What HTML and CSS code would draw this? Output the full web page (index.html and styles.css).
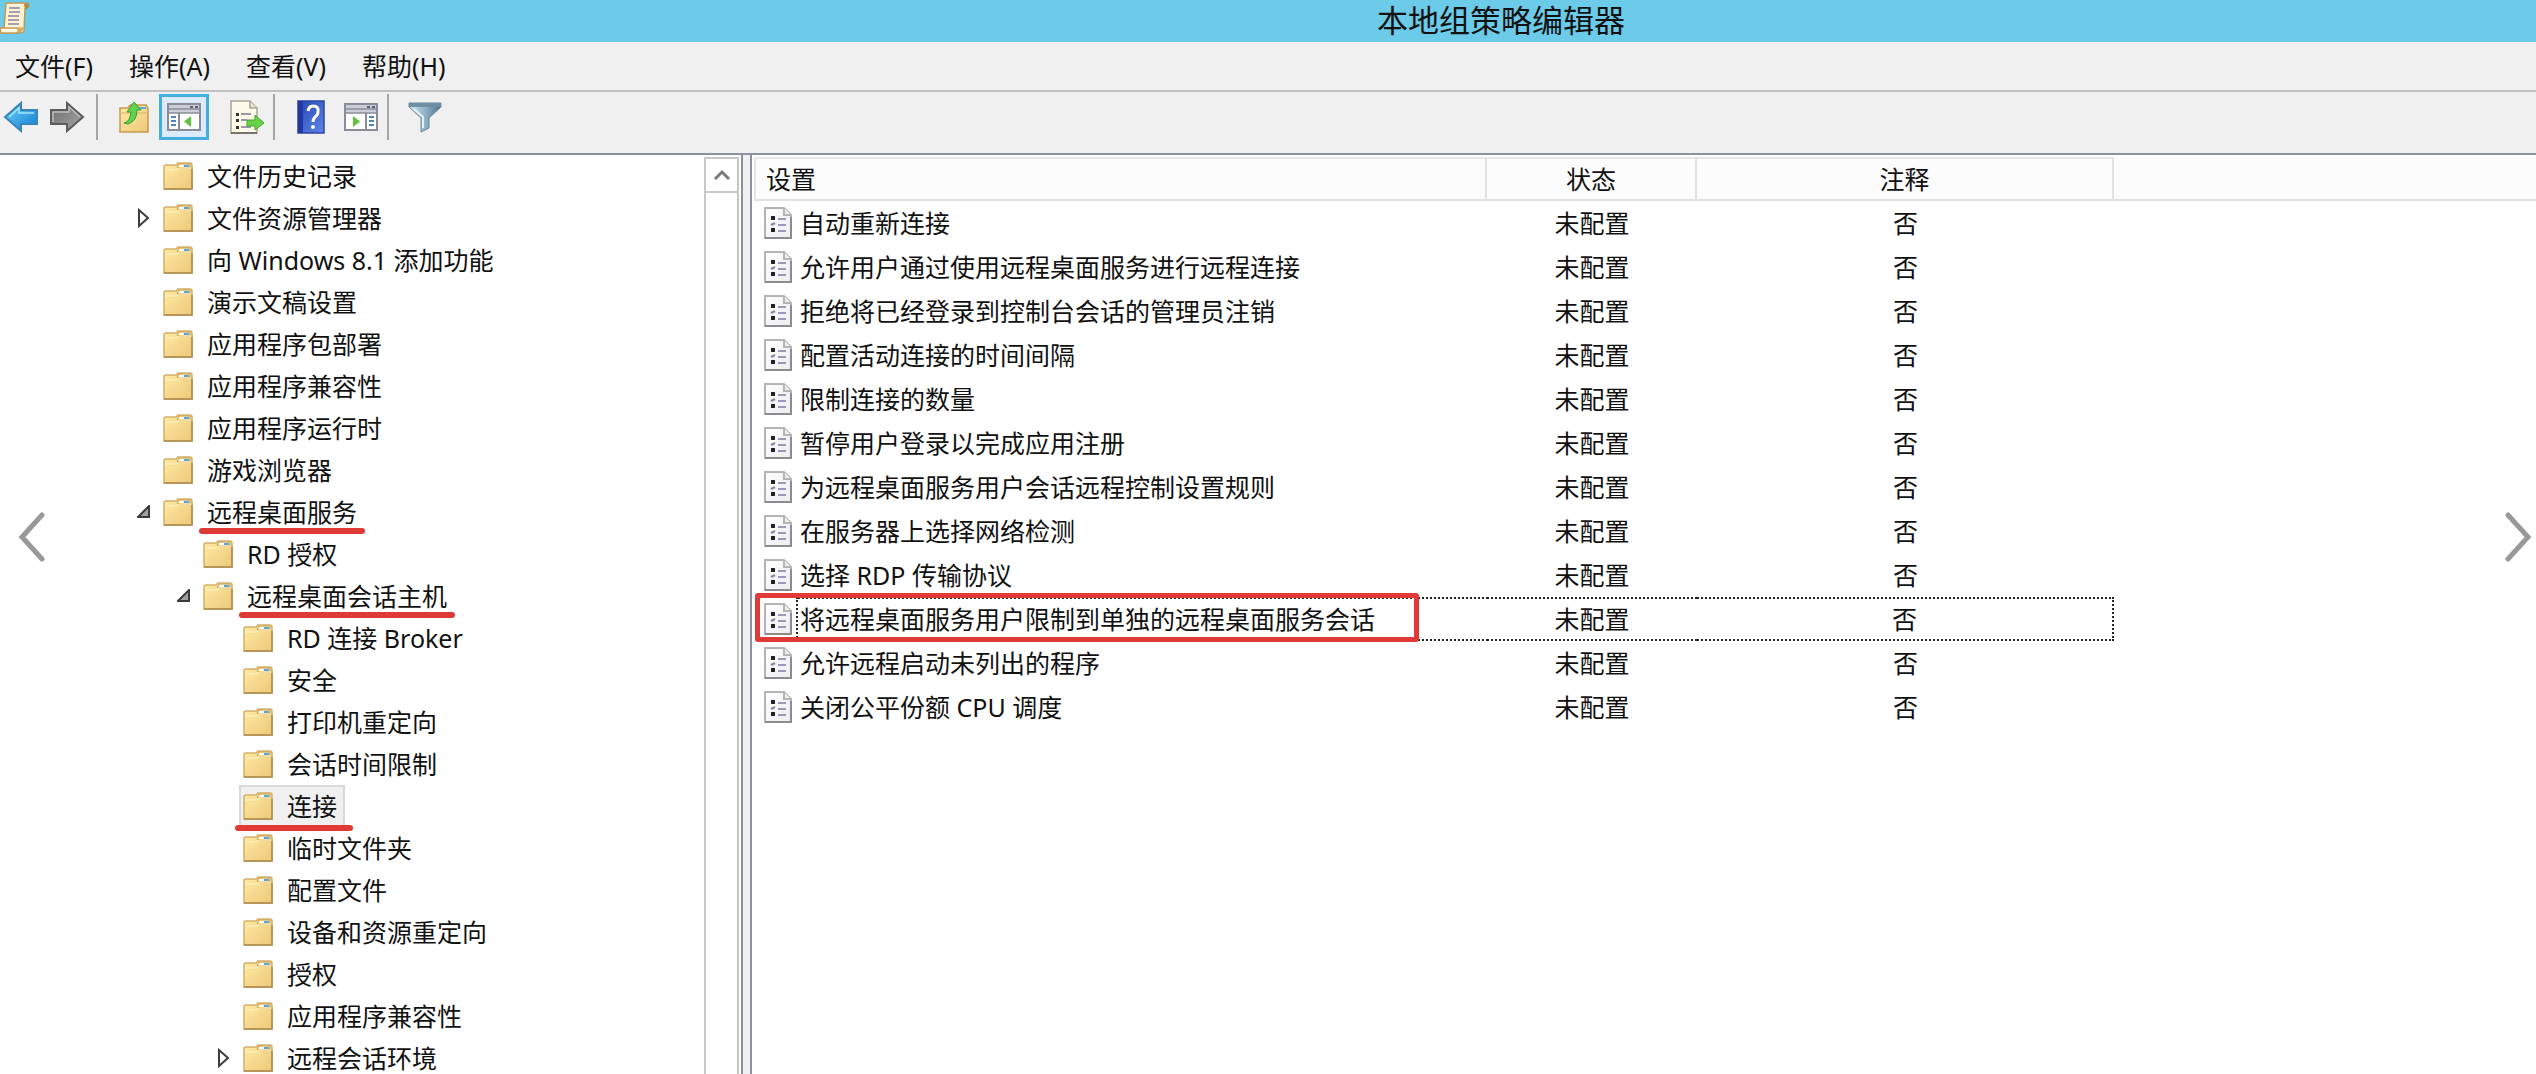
FILE: index.html
```
<!DOCTYPE html>
<html lang="zh-CN">

<head>
    <meta charset="UTF-8">
    <title>本地组策略编辑器</title>
    <link rel="stylesheet" href="styles.css">
</head>

<body>

    <!-- 共用图标 -->
    <svg class="defs" width="0" height="0" aria-hidden="true">
        <defs>
            <linearGradient id="g-folder" x1="0" y1="0" x2="1" y2="1">
                <stop offset="0" stop-color="#ffeaa6" />
                <stop offset="1" stop-color="#edc878" />
            </linearGradient>
            <linearGradient id="g-blue" x1="0" y1="0" x2="1" y2="1">
                <stop offset="0" stop-color="#6fd0fa" />
                <stop offset="1" stop-color="#0f7ed2" />
            </linearGradient>
            <linearGradient id="g-gray" x1="0" y1="0" x2="1" y2="1">
                <stop offset="0" stop-color="#6a6a6a" />
                <stop offset="1" stop-color="#a8a8a8" />
            </linearGradient>
            <linearGradient id="g-help" x1="0" y1="0" x2="1" y2="1">
                <stop offset="0" stop-color="#2746b0" />
                <stop offset="1" stop-color="#5d86ea" />
            </linearGradient>
            <linearGradient id="g-funnel" x1="0" y1="0" x2="1" y2="0">
                <stop offset="0" stop-color="#d4e8f3" />
                <stop offset="0.5" stop-color="#8fb3c8" />
                <stop offset="1" stop-color="#4f7288" />
            </linearGradient>
            <linearGradient id="g-paper" x1="0" y1="0" x2="1" y2="1">
                <stop offset="0" stop-color="#ffffff" />
                <stop offset="1" stop-color="#ececf0" />
            </linearGradient>
        </defs>
        <symbol id="folder" viewBox="0 0 30 28">
            <path d="M1 27V5q0-2 2-2h10l2-2h12q2 0 2 2v24z" fill="url(#g-folder)" stroke="#d3b068" stroke-width="1.5" />
            <path d="M14 5l2-3h11v4H15z" fill="#f8e6b4" stroke="#c9a45c" stroke-width="1" />
            <path d="M17 3h4v2h-4z" fill="#fff" />
            <path d="M21 3h5v2h-5z" fill="#5aa5dc" />
            <path d="M2 8h12l2-2h12" fill="none" stroke="#fff3c4" stroke-width="1" />
            <path d="M1 27h28V7" fill="none" stroke="#a98a4c" stroke-width="1.5" />
        </symbol>
        <symbol id="policy" viewBox="0 0 28 32">
            <path d="M1 1h19l7 7v23H1z" fill="url(#g-paper)" stroke="#b4b4b4" stroke-width="2" />
            <path d="M20 1v7h7" fill="#eee" stroke="#b4b4b4" stroke-width="2" />
            <path d="M1 31h26V10" fill="none" stroke="#8c8c8c" stroke-width="2" />
            <path d="M7 9h4v4H7zM7 21h4v4H7z" fill="#222" />
            <path d="M7 18l4-2" stroke="#8b87a8" stroke-width="2.5" />
            <path d="M14 12h8M14 18h8M14 24h8" stroke="#9b98bb" stroke-width="2" />
        </symbol>
        <symbol id="opened" viewBox="0 0 14 14">
            <path d="M12 1v11H1z" fill="#a0a0a0" stroke="#3c3c3c" stroke-width="2" />
        </symbol>
        <symbol id="closed" viewBox="0 0 14 20">
            <path d="M2 2l9 8-9 8z" fill="#fff" stroke="#3c3c3c" stroke-width="2" />
        </symbol>
    </svg>

    <div id="window">
        <header class="title-bar">
            <svg class="app-icon" width="30" height="32" viewBox="0 0 30 32" aria-hidden="true">
                <path d="M6 1h21q3 1 1 4l-3 2-1 22q-1 2-4 2H3q-3-1-3-5h4z" fill="#fdf3d4" stroke="#b99860" stroke-width="1.5" />
                <path d="M24 2q5-2 5 3l-4 3z" fill="#b38a47" />
                <path d="M0 26h18q1 5-2 5H1z" fill="#fff8df" stroke="#c49c5a" stroke-width="1.5" />
                <path d="M18 26l5-1q1 5-5 6z" fill="#d9a95e" />
                <path d="M9 6h11M9 10h11M8 14h11M8 18h11M8 22h11" stroke="#8d83a2" stroke-width="1.5" />
            </svg>
            <h1>本地组策略编辑器</h1>
        </header>

        <nav class="menu-bar">
            <button type="button">文件(F)</button>
            <button type="button">操作(A)</button>
            <button type="button">查看(V)</button>
            <button type="button">帮助(H)</button>
        </nav>

        <div class="tool-bar">
            <button type="button" aria-label="后退">
                <svg width="36" height="32" viewBox="0 0 36 32">
                    <path d="M2 16L18 2v7h16v14H18v7z" fill="url(#g-blue)" stroke="#3a85b8" stroke-width="2" />
                    <path d="M6 16L16 7v5h15" fill="none" stroke="#a5e4ff" stroke-width="1.5" />
                </svg>
            </button>
            <button type="button" aria-label="前进">
                <svg width="36" height="32" viewBox="0 0 36 32">
                    <path d="M34 16L18 2v7H2v14h16v7z" fill="url(#g-gray)" stroke="#5c5c5c" stroke-width="2" />
                    <path d="M4 21V11h16V6l11 10" fill="none" stroke="#bdbdbd" stroke-width="1.5" />
                </svg>
            </button>
            <span class="separator"></span>
            <button type="button" class="wide" aria-label="上一级">
                <svg width="32" height="32" viewBox="0 0 32 32">
                    <path d="M2 31V7h8l2-3h16l2 3v24z" fill="url(#g-folder)" stroke="#c39b51" stroke-width="1.5" />
                    <path d="M21 6h7v2h-7z" fill="#5aa5dc" />
                    <path d="M2 12h28" stroke="#d9b467" stroke-width="1" />
                    <path d="M6 22q6-1 7-11H9l7-10 7 8h-4q0 11-9 14z" fill="#62d150" stroke="#36a02c" stroke-width="1" />
                </svg>
            </button>
            <button type="button" class="wide active" aria-label="显示/隐藏控制台树">
                <svg width="34" height="28" viewBox="0 0 34 28">
                    <path d="M1 1h32v26H1z" fill="#fff" stroke="#8a8c98" stroke-width="2" />
                    <path d="M2 2h30v8H2z" fill="#c9ced9" />
                    <path d="M2 6h30M2 10h30" stroke="#8a8c98" stroke-width="1.5" />
                    <path d="M23 3h3v2h-3zM28 3h3v2h-3z" fill="#53617e" />
                    <path d="M12 10v17" stroke="#8a8c98" stroke-width="2" />
                    <path d="M4 14h5M4 18h5M4 22h5" stroke="#4f83b8" stroke-width="2" />
                    <path d="M24 13v11l-7-5.500z" fill="#5cc23a" />
                </svg>
            </button>
            <button type="button" class="wide" aria-label="导出列表">
                <svg width="34" height="34" viewBox="0 0 34 34">
                    <path d="M1 1h19l7 7v25H1z" fill="#fdfaea" stroke="#a9a493" stroke-width="1.5" />
                    <path d="M20 1v7h7" fill="#e8e4d4" stroke="#a9a493" stroke-width="1.5" />
                    <path d="M1 33h26" stroke="#77736a" stroke-width="2" />
                    <path d="M6 13h3v3H6zM6 19h3v3H6zM6 26h3v3H6z" fill="#333" />
                    <path d="M11 14h10M11 20h6M11 27h10" stroke="#7a7892" stroke-width="1.5" />
                    <path d="M17 20h8v-5l9 8-9 7v-4h-8z" fill="#67d348" stroke="#43a82e" stroke-width="1" />
                </svg>
            </button>
            <span class="separator"></span>
            <button type="button" class="wide" aria-label="帮助">
                <svg width="28" height="34" viewBox="0 0 28 34">
                    <path d="M1 1h26v32H1z" fill="url(#g-help)" stroke="#2b46a0" stroke-width="1.5" />
                    <path d="M1 1h5v32H1z" fill="#2038a0" />
                    <path d="M11 11q1-5 5-5 6 0 5 6 0 3-3 5-2 2-2 5" fill="none" stroke="#fff" stroke-width="3" />
                    <circle cx="16" cy="27" r="2" fill="#fff" />
                </svg>
            </button>
            <button type="button" class="wide" aria-label="显示/隐藏操作窗格">
                <svg width="34" height="28" viewBox="0 0 34 28">
                    <path d="M1 1h32v26H1z" fill="#fff" stroke="#8a8c98" stroke-width="2" />
                    <path d="M2 2h30v8H2z" fill="#c9ced9" />
                    <path d="M2 6h30M2 10h30" stroke="#8a8c98" stroke-width="1.5" />
                    <path d="M23 3h3v2h-3zM28 3h3v2h-3z" fill="#53617e" />
                    <path d="M22 10v17" stroke="#8a8c98" stroke-width="2" />
                    <path d="M25 14h5M25 18h5M25 22h5" stroke="#4f83b8" stroke-width="2" />
                    <path d="M9 13v11l7-5.500z" fill="#5cc23a" />
                </svg>
            </button>
            <span class="separator"></span>
            <button type="button" class="wide" aria-label="筛选器">
                <svg width="34" height="32" viewBox="0 0 34 32">
                    <path d="M1 2h32v4L21 17v10l-8 4V17L1 6z" fill="url(#g-funnel)" stroke="#6f8795" stroke-width="1" />
                    <path d="M1 2h32v4H1z" fill="#6d8ea3" />
                    <path d="M6 8l9 8v11" fill="none" stroke="#e4f3fa" stroke-width="2" />
                </svg>
            </button>
        </div>

        <main class="panes">
            <section class="tree-pane">
                <ul class="tree">
                    <li><div class="node"><svg class="folder"><use href="#folder" /></svg><span>文件历史记录</span></div></li>
                    <li><div class="node"><button type="button" class="toggle" aria-label="展开"><svg width="14" height="20"><use href="#closed" /></svg></button><svg class="folder"><use href="#folder" /></svg><span>文件资源管理器</span></div></li>
                    <li><div class="node"><svg class="folder"><use href="#folder" /></svg><span>向 Windows 8.1 添加功能</span></div></li>
                    <li><div class="node"><svg class="folder"><use href="#folder" /></svg><span>演示文稿设置</span></div></li>
                    <li><div class="node"><svg class="folder"><use href="#folder" /></svg><span>应用程序包部署</span></div></li>
                    <li><div class="node"><svg class="folder"><use href="#folder" /></svg><span>应用程序兼容性</span></div></li>
                    <li><div class="node"><svg class="folder"><use href="#folder" /></svg><span>应用程序运行时</span></div></li>
                    <li><div class="node"><svg class="folder"><use href="#folder" /></svg><span>游戏浏览器</span></div></li>
                    <li>
                        <div class="node"><button type="button" class="toggle" aria-label="折叠"><svg width="14" height="14"><use href="#opened" /></svg></button><svg class="folder"><use href="#folder" /></svg><span class="underlined">远程桌面服务</span></div>
                        <ul>
                            <li><div class="node"><svg class="folder"><use href="#folder" /></svg><span>RD 授权</span></div></li>
                            <li>
                                <div class="node"><button type="button" class="toggle" aria-label="折叠"><svg width="14" height="14"><use href="#opened" /></svg></button><svg class="folder"><use href="#folder" /></svg><span class="underlined">远程桌面会话主机</span></div>
                                <ul>
                                    <li><div class="node"><svg class="folder"><use href="#folder" /></svg><span>RD 连接 Broker</span></div></li>
                                    <li><div class="node"><svg class="folder"><use href="#folder" /></svg><span>安全</span></div></li>
                                    <li><div class="node"><svg class="folder"><use href="#folder" /></svg><span>打印机重定向</span></div></li>
                                    <li><div class="node"><svg class="folder"><use href="#folder" /></svg><span>会话时间限制</span></div></li>
                                    <li><div class="node selected underlined"><svg class="folder"><use href="#folder" /></svg><span>连接</span></div></li>
                                    <li><div class="node"><svg class="folder"><use href="#folder" /></svg><span>临时文件夹</span></div></li>
                                    <li><div class="node"><svg class="folder"><use href="#folder" /></svg><span>配置文件</span></div></li>
                                    <li><div class="node"><svg class="folder"><use href="#folder" /></svg><span>设备和资源重定向</span></div></li>
                                    <li><div class="node"><svg class="folder"><use href="#folder" /></svg><span>授权</span></div></li>
                                    <li><div class="node"><svg class="folder"><use href="#folder" /></svg><span>应用程序兼容性</span></div></li>
                                    <li><div class="node"><button type="button" class="toggle" aria-label="展开"><svg width="14" height="20"><use href="#closed" /></svg></button><svg class="folder"><use href="#folder" /></svg><span>远程会话环境</span></div></li>
                                </ul>
                            </li>
                        </ul>
                    </li>
                </ul>
                <div class="scroll-bar">
                    <button type="button" aria-label="向上滚动">
                        <svg width="18" height="14" viewBox="0 0 18 14">
                            <path d="M2 11l7-7 7 7" fill="none" stroke="#7a7a7a" stroke-width="3" />
                        </svg>
                    </button>
                </div>
            </section>

            <section class="list-pane">
                <table>
                    <colgroup>
                        <col class="col-name">
                        <col class="col-state">
                        <col class="col-comment">
                        <col>
                    </colgroup>
                    <thead>
                        <tr><th>设置</th><th>状态</th><th>注释</th><td></td></tr>
                    </thead>
                    <tbody>
                        <tr><td><div class="name"><svg><use href="#policy" /></svg><span>自动重新连接</span></div></td><td>未配置</td><td>否</td><td></td></tr>
                        <tr><td><div class="name"><svg><use href="#policy" /></svg><span>允许用户通过使用远程桌面服务进行远程连接</span></div></td><td>未配置</td><td>否</td><td></td></tr>
                        <tr><td><div class="name"><svg><use href="#policy" /></svg><span>拒绝将已经登录到控制台会话的管理员注销</span></div></td><td>未配置</td><td>否</td><td></td></tr>
                        <tr><td><div class="name"><svg><use href="#policy" /></svg><span>配置活动连接的时间间隔</span></div></td><td>未配置</td><td>否</td><td></td></tr>
                        <tr><td><div class="name"><svg><use href="#policy" /></svg><span>限制连接的数量</span></div></td><td>未配置</td><td>否</td><td></td></tr>
                        <tr><td><div class="name"><svg><use href="#policy" /></svg><span>暂停用户登录以完成应用注册</span></div></td><td>未配置</td><td>否</td><td></td></tr>
                        <tr><td><div class="name"><svg><use href="#policy" /></svg><span>为远程桌面服务用户会话远程控制设置规则</span></div></td><td>未配置</td><td>否</td><td></td></tr>
                        <tr><td><div class="name"><svg><use href="#policy" /></svg><span>在服务器上选择网络检测</span></div></td><td>未配置</td><td>否</td><td></td></tr>
                        <tr><td><div class="name"><svg><use href="#policy" /></svg><span>选择 RDP 传输协议</span></div></td><td>未配置</td><td>否</td><td></td></tr>
                        <tr class="focused"><td><div class="name boxed"><svg><use href="#policy" /></svg><span>将远程桌面服务用户限制到单独的远程桌面服务会话</span></div></td><td>未配置</td><td>否</td><td></td></tr>
                        <tr><td><div class="name"><svg><use href="#policy" /></svg><span>允许远程启动未列出的程序</span></div></td><td>未配置</td><td>否</td><td></td></tr>
                        <tr><td><div class="name"><svg><use href="#policy" /></svg><span>关闭公平份额 CPU 调度</span></div></td><td>未配置</td><td>否</td><td></td></tr>
                    </tbody>
                </table>
            </section>
        </main>
    </div>

    <!-- 左右翻页 -->
    <button type="button" class="pager prev" aria-label="上一张">
        <svg width="28" height="50" viewBox="0 0 28 50">
            <path d="M24 3L4 25l20 22" fill="none" stroke="#999" stroke-width="5" stroke-linecap="round" />
        </svg>
    </button>
    <button type="button" class="pager next" aria-label="下一张">
        <svg width="28" height="50" viewBox="0 0 28 50">
            <path d="M4 3l20 22L4 47" fill="none" stroke="#999" stroke-width="5" stroke-linecap="round" />
        </svg>
    </button>

</body>

</html>
```
FILE: styles.css
```
* {
    box-sizing: border-box;
}

body {
    margin: 0;
    background-color: #fff;
    color: #111;
    font-family: "Noto Sans", "Noto Sans CJK SC", sans-serif;
    font-size: 25px;
    line-height: 36px;
}

button {
    padding: 0;
    border: 0;
    background: none;
    color: inherit;
    font: inherit;
    cursor: pointer;
}

svg {
    display: block;
    flex: none;
}

.defs {
    position: absolute;
}

#window {
    display: flex;
    flex-direction: column;
    height: 100vh;
    overflow: hidden;
}

/* 标题栏 */
.title-bar {
    display: flex;
    flex: none;
    height: 42px;
    background-color: #6bcbe9;
}

.app-icon {
    margin-top: 2px;
}

.title-bar h1 {
    flex: 1;
    margin: 0;
    padding-left: 436px;
    font-family: "Noto Sans CJK SC", sans-serif;
    font-size: 31px;
    font-weight: normal;
    line-height: 38px;
    text-align: center;
}

/* 菜单栏 */
.menu-bar {
    display: flex;
    flex: none;
    gap: 36px;
    align-items: center;
    height: 50px;
    padding-left: 15px;
    background-color: #f0f0f0;
    border-bottom: 2px solid #c0c0c0;
}

/* 工具栏 */
.tool-bar {
    display: flex;
    flex: none;
    align-items: flex-start;
    height: 63px;
    padding: 2px 3px;
    background-color: #f0f0f0;
    border-bottom: 2px solid #8d909e;
}

.tool-bar button {
    display: flex;
    align-items: center;
    justify-content: center;
    width: 46px;
    height: 46px;
    padding-right: 10px;
}

.tool-bar .wide {
    width: 50px;
    padding-right: 0;
}

.tool-bar .active {
    margin-right: 13px;
    background-color: #dcebfc;
    border: 3px solid #43aee0;
}

.separator {
    width: 2px;
    height: 46px;
    margin-right: 11px;
    margin-left: 1px;
    background-color: #a6a6a6;
}

/* 左右窗格 */
.panes {
    display: flex;
    flex: 1;
    gap: 7px;
    min-height: 0;
    background-color: #f0f0f0;
}

.tree-pane {
    display: flex;
    flex: none;
    width: 743px;
    overflow: hidden;
    background-color: #fff;
    border-right: 2px solid #8d909e;
}

.tree-pane ul {
    margin: 0;
    padding: 0;
    list-style: none;
}

.tree-pane .tree {
    flex: 1;
    padding-left: 159px;
}

.tree-pane .tree ul {
    padding-left: 40px;
}

.node {
    position: relative;
    display: flex;
    align-items: center;
    width: fit-content;
    height: 42px;
    padding: 0 8px 0 4px;
    white-space: nowrap;
}

.folder {
    width: 30px;
    height: 28px;
    margin-right: 14px;
}

/* 展开箭头在文件夹左侧 */
.toggle {
    position: absolute;
    right: 100%;
    margin-right: 8px;
}

.selected {
    background-color: #f0f0f0;
    outline: 2px solid #d9d9d9;
    outline-offset: -2px;
}

.underlined {
    position: relative;
}

.underlined::after {
    content: "";
    position: absolute;
    right: -8px;
    bottom: -4px;
    left: -8px;
    height: 6px;
    background-color: #e03a36;
    border-radius: 3px;
}

.selected::after {
    left: -4px;
}

.scroll-bar {
    flex: none;
    width: 35px;
    margin: 2px 2px 0 0;
    border: 2px solid #c8c8c8;
    border-bottom: 0;
}

.scroll-bar button {
    display: flex;
    align-items: center;
    justify-content: center;
    width: 100%;
    height: 34px;
    border-bottom: 2px solid #c8c8c8;
}

/* 策略列表 */
.list-pane {
    flex: 1;
    min-width: 0;
    padding: 2px 0 0 2px;
    overflow: hidden;
    background-color: #fff;
    border-left: 2px solid #8d909e;
}

table {
    width: 100%;
    border-collapse: separate;
    border-spacing: 0;
    table-layout: fixed;
}

.col-name {
    width: 733px;
}

.col-state {
    width: 210px;
}

.col-comment {
    width: 417px;
}

th,
td {
    height: 44px;
    padding: 0;
    font-weight: normal;
    text-align: center;
    white-space: nowrap;
}

thead th,
thead td {
    background-color: #fcfcfc;
    border-bottom: 2px solid #e2e2e2;
}

thead th {
    border-top: 2px solid #e6e6e6;
    border-right: 2px solid #e2e2e2;
}

thead th:first-child {
    padding-left: 10px;
    border-left: 2px solid #e6e6e6;
    text-align: left;
}

.name {
    position: relative;
    display: flex;
    align-items: center;
    height: 44px;
    padding-left: 10px;
    text-align: left;
}

.name svg {
    width: 28px;
    height: 32px;
    margin-right: 4px;
}

.name span {
    padding-left: 4px;
}

/* 焦点行的虚线框 */
.focused td:nth-child(-n+3),
.focused .name span {
    background-image: repeating-linear-gradient(to right, #222 0 2px, transparent 2px 4px), repeating-linear-gradient(to right, #222 0 2px, transparent 2px 4px);
    background-repeat: no-repeat;
    background-size: 100% 2px;
    background-position: 0 0, 0 100%;
}

.focused td:first-child {
    background: none;
}

.focused .name span {
    flex: 1;
    padding: 4px 0 4px 2px;
    border-left: 2px dotted #222;
}

.focused td:nth-child(3) {
    border-right: 2px dotted #222;
}

/* 红色标注框 */
.boxed::after {
    content: "";
    position: absolute;
    top: -4px;
    right: 68px;
    bottom: -1px;
    left: 1px;
    border: 5px solid #e03a36;
    border-radius: 3px;
}

/* 翻页箭头 */
.pager {
    position: fixed;
    top: 50%;
    transform: translateY(-50%);
}

.prev {
    left: 18px;
}

.next {
    right: 4px;
}
```
